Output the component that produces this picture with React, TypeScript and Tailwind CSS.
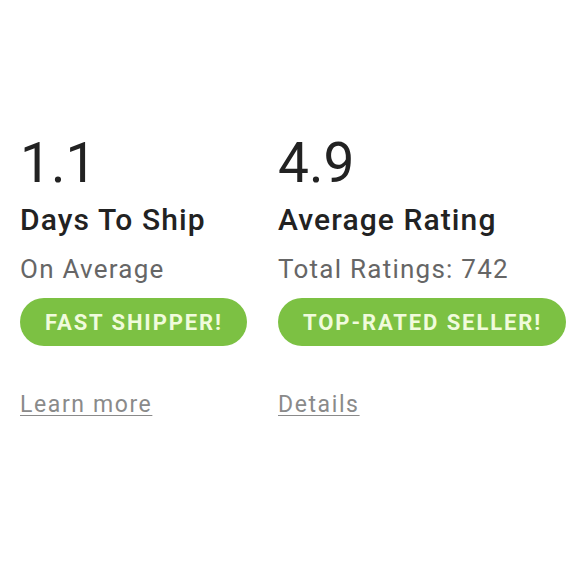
import React from 'react';

interface StatProps {
  value: string;
  title: string;
  subtitle: string;
  badge: string;
  link: string;
}

function Stat({ value, title, subtitle, badge, link }: StatProps) {
  return (
    <div className="flex flex-col items-start w-[258px] shrink-0 whitespace-nowrap">
      <div className="text-[55px] leading-[56px] font-normal text-[#222222]">{value}</div>
      <div className="mt-[11px] text-[30px] leading-[36px] font-medium text-[#222222] tracking-[1.1px]">{title}</div>
      <div className="mt-[15px] text-[26px] leading-[32px] text-[#666666] tracking-[1.25px]">{subtitle}</div>
      <div className="mt-[13px] h-[48px] pl-[25px] pr-[24px] rounded-full bg-[#7cc143] flex items-center text-[22px] font-bold text-[#f0fbdc] tracking-[1.9px]">
        {badge}
      </div>
      <a
        href="#"
        className="mt-[45px] text-[23px] leading-[28px] text-[#8a8a8a] tracking-[1.6px] underline underline-offset-[3px] decoration-1"
      >
        {link}
      </a>
    </div>
  );
}

export default function App() {
  return (
    <div className="min-h-[580px] bg-white pt-[135px] pl-[20px] overflow-hidden" style={{ fontFamily: 'Roboto, "Liberation Sans", sans-serif' }}>
      <div className="flex">
        <Stat value="1.1" title="Days To Ship" subtitle="On Average" badge="FAST SHIPPER!" link="Learn more" />
        <Stat value="4.9" title="Average Rating" subtitle="Total Ratings: 742" badge="TOP-RATED SELLER!" link="Details" />
      </div>
    </div>
  );
}
